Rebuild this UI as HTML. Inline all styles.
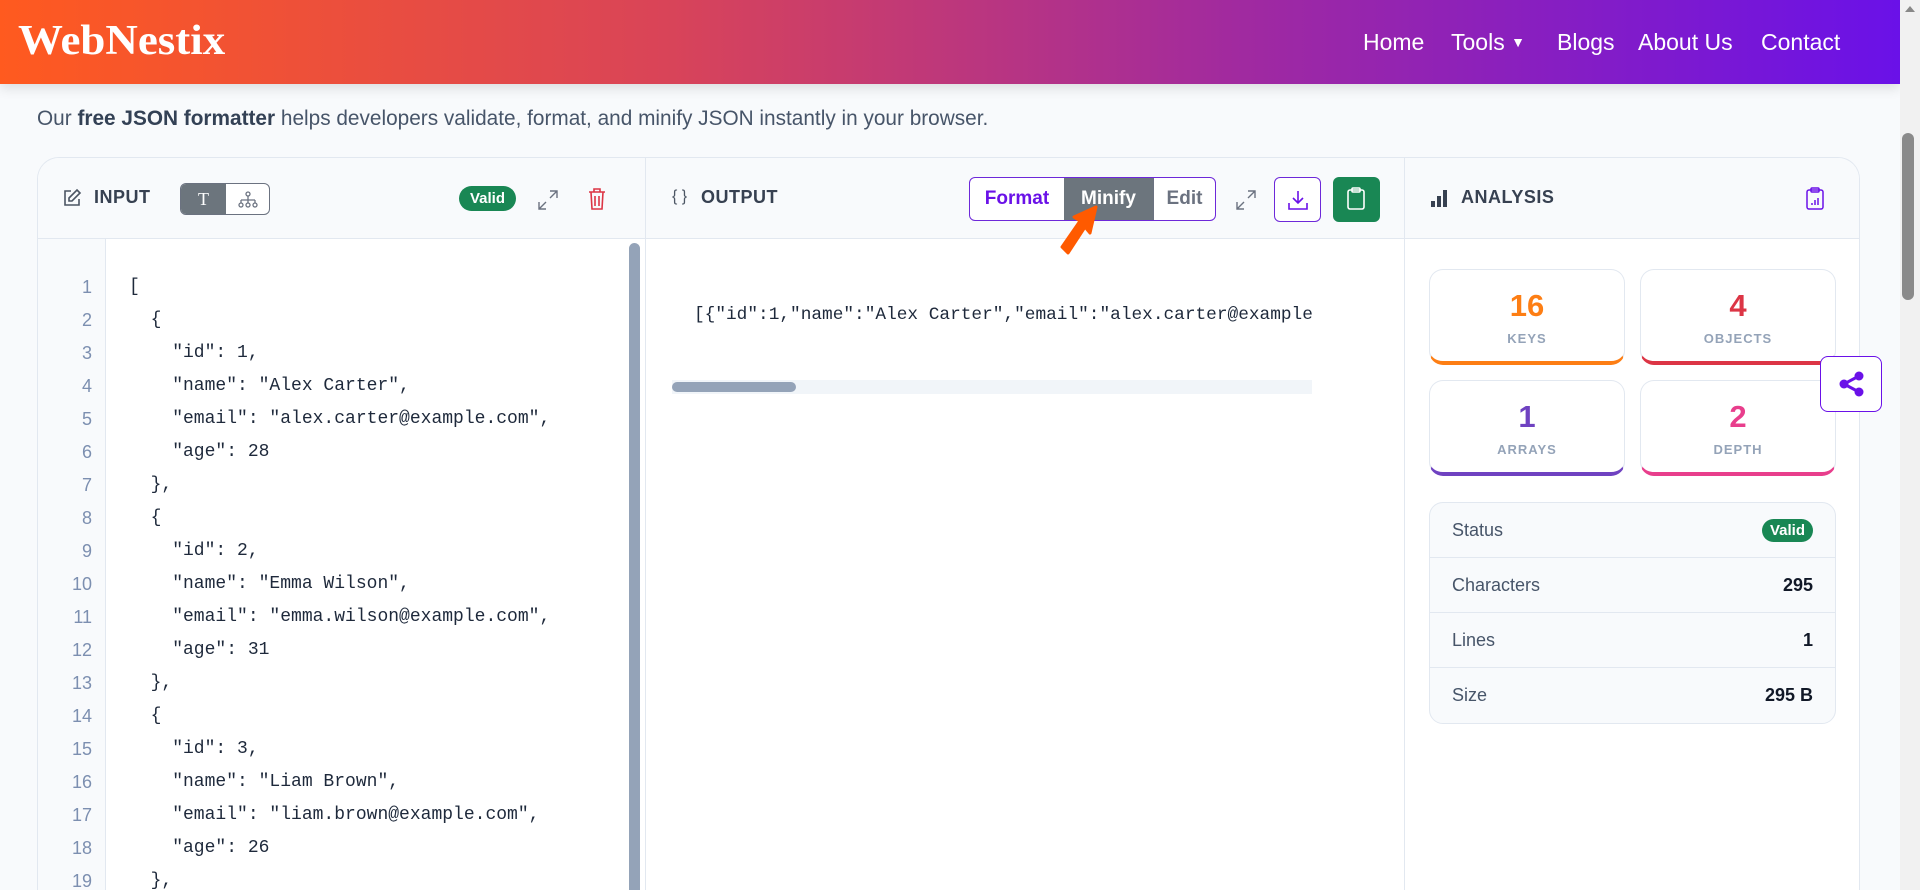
<!DOCTYPE html>
<html style="width:1920px;height:890px;overflow:hidden"><head><meta charset="utf-8"><style>
*{box-sizing:border-box;margin:0;padding:0}
body{width:1920px;height:890px;overflow:hidden;background:#f8fafc;font-family:"Liberation Sans",sans-serif;position:relative;color:#334155}
.hdr{position:absolute;left:0;top:0;width:1900px;height:84px;background:linear-gradient(90deg,#ff5a1f 0%,#d94458 35%,#a12a9f 65%,#6a11e8 100%);box-shadow:0 4px 12px rgba(0,0,0,.12)}
.logo{position:absolute;left:18px;top:17px;font-family:"Liberation Serif",serif;font-weight:bold;font-size:42px;color:#fff;transform:scaleX(1.07);transform-origin:left}
.nav{position:absolute;top:29px;font-size:23px;color:#fff}
.sub{position:absolute;left:37px;top:107px;font-size:20.8px;color:#475569}
.card{position:absolute;left:37px;top:157px;width:1823px;height:733px;background:#fff;border:1px solid #e2e8f0;border-bottom:0;border-radius:22px 22px 0 0;overflow:hidden}
.ch{position:absolute;left:0;top:0;width:100%;height:81px;background:#f8fafc;border-bottom:1px solid #e2e8f0}
.vd{position:absolute;top:0;width:1px;height:100%;background:#e2e8f0}
.ttl{position:absolute;top:29px;font-size:18px;font-weight:bold;color:#374151;letter-spacing:.5px}
.abs{position:absolute}
.gut{position:absolute;left:0;top:81px;width:68px;height:660px;background:#f8fafc;border-right:1px solid #e2e8f0}
.code{position:absolute;left:91px;top:113px;font-family:"Liberation Mono",monospace;font-size:18px;line-height:33px;color:#1e293b;white-space:pre}
.stat{position:absolute;width:196px;height:96px;background:#fff;border:1px solid #e2e8f0;border-radius:14px;border-bottom-width:4px;text-align:center}
.stat b{display:block;font-size:31px;margin-top:20px;line-height:32px}
.stat span{display:block;font-size:13px;font-weight:bold;color:#94a3b8;letter-spacing:1px;margin-top:9px}
.tbl{position:absolute;left:1429px;top:502px;width:407px;height:222px;background:#f8fafc;border:1px solid #e2e8f0;border-radius:14px;overflow:hidden}
.row{height:55px;border-bottom:1px solid #e2e8f0;display:flex;justify-content:space-between;align-items:center;padding:0 22px;font-size:18px;color:#475569}
.row:last-child{border-bottom:none}
.row b{color:#111827}
.badge{background:#198754;color:#fff;font-weight:bold;border-radius:12px;font-size:15px;padding:3px 8px}
</style></head><body>
<div class="hdr">
<div class="logo">WebNestix</div>
<div class="nav" style="left:1363px">Home</div>
<div class="nav" style="left:1451px">Tools <span style="font-size:14px;vertical-align:3px">▼</span></div>
<div class="nav" style="left:1557px">Blogs</div>
<div class="nav" style="left:1638px">About Us</div>
<div class="nav" style="left:1761px">Contact</div>
</div>
<div class="sub">Our <b style="color:#334155">free JSON formatter</b> helps developers validate, format, and minify JSON instantly in your browser.</div>

<div class="card">
<div class="ch"></div>
<div class="vd" style="left:607px"></div>
<div class="vd" style="left:1366px"></div>
<svg class="abs" style="left:24px;top:30px" width="20" height="20" viewBox="0 0 20 20" fill="none" stroke="#4b5563" stroke-width="1.6"><path d="M9 3H3v14h14v-6"/><path d="M15 2l3 3-8 8H7v-3z"/></svg>
<div class="ttl" style="left:56px">INPUT</div>
<div class="abs" style="left:142px;top:25px;width:90px;height:32px;border:1px solid #6b7280;border-radius:6px;overflow:hidden;background:#fff">
<div style="width:45px;height:100%;background:#6c757d;color:#fff;font-family:'Liberation Serif',serif;font-size:18px;text-align:center;line-height:30px">T</div>
<svg class="abs" style="left:56px;top:7px" width="22" height="18" viewBox="0 0 22 18" fill="none" stroke="#6b7280" stroke-width="1.3"><circle cx="11" cy="3" r="2"/><path d="M11 5v4M4 9h14M4 9v3M11 9v3M18 9v3"/><circle cx="4" cy="14" r="2"/><circle cx="11" cy="14" r="2"/><circle cx="18" cy="14" r="2"/></svg>
</div>
<div class="abs badge" style="left:421px;top:28px;font-size:15px;padding:4px 11px;border-radius:14px">Valid</div>
<svg class="abs" style="left:498px;top:30px" width="24" height="24" viewBox="0 0 24 24" fill="none" stroke="#6b7280" stroke-width="1.4"><path d="M14 3h7v7M21 3l-7 7M10 21H3v-7M3 21l7-7"/></svg>
<svg class="abs" style="left:548px;top:29px" width="22" height="24" viewBox="0 0 22 24" fill="none" stroke="#dc3545" stroke-width="1.6"><path d="M3 5h16M8 5V2h6v3M5 5l1 17h10l1-17M9 9v10M13 9v10"/></svg>
<div class="abs" style="left:634px;top:30px;font-size:16px;color:#4b5563">{ }</div>
<div class="ttl" style="left:663px">OUTPUT</div>
<div class="abs" style="left:931px;top:19px;width:247px;height:44px;border:1px solid #6d28d9;border-radius:6px;overflow:hidden;display:flex;font-size:19px;font-weight:bold;line-height:42px;background:#fff">
<div style="width:94px;text-align:center;color:#6a11e8">Format</div>
<div style="width:89px;text-align:center;background:#6c757d;color:#fff">Minify</div>
<div style="flex:1;text-align:center;color:#6b7280;border-left:1px solid #6b7280">Edit</div>
</div>
<svg class="abs" style="left:1196px;top:30px" width="24" height="24" viewBox="0 0 24 24" fill="none" stroke="#6b7280" stroke-width="1.4"><path d="M14 3h7v7M21 3l-7 7M10 21H3v-7M3 21l7-7"/></svg>
<div class="abs" style="left:1236px;top:19px;width:47px;height:45px;border:1px solid #6d28d9;border-radius:6px;background:#fff"><svg style="position:absolute;left:12px;top:11px" width="22" height="22" viewBox="0 0 22 22" fill="none" stroke="#6a11e8" stroke-width="1.6"><path d="M11 2v12M6 9l5 5 5-5M2 14v6h18v-6"/></svg></div>
<div class="abs" style="left:1295px;top:19px;width:47px;height:45px;border-radius:6px;background:#198754"><svg style="position:absolute;left:13px;top:10px" width="20" height="24" viewBox="0 0 20 24" fill="none" stroke="#fff" stroke-width="1.6"><rect x="2" y="3" width="16" height="19" rx="2"/><rect x="6" y="1" width="8" height="4" rx="1"/></svg></div>
<svg class="abs" style="left:1392px;top:32px" width="18" height="17" viewBox="0 0 18 17" fill="#374151"><rect x="1" y="11" width="4" height="6"/><rect x="7" y="6" width="4" height="11"/><rect x="13" y="0" width="4" height="17"/></svg>
<div class="ttl" style="left:1423px">ANALYSIS</div>
<svg class="abs" style="left:1767px;top:29px" width="20" height="24" viewBox="0 0 20 24" fill="none" stroke="#6a11e8" stroke-width="1.5"><rect x="2" y="3" width="16" height="19" rx="2"/><rect x="6" y="1" width="8" height="4" rx="1"/><path d="M7 18v-2M10 18v-5M13 18v-7"/></svg>
<div class="gut"></div>
<div class="abs" style="left:591px;top:85px;width:11px;height:660px;background:#94a3b8;border-radius:6px"></div>
<div class="code">[
  {
    "id": 1,
    "name": "Alex Carter",
    "email": "alex.carter@example.com",
    "age": 28
  },
  {
    "id": 2,
    "name": "Emma Wilson",
    "email": "emma.wilson@example.com",
    "age": 31
  },
  {
    "id": 3,
    "name": "Liam Brown",
    "email": "liam.brown@example.com",
    "age": 26
  },</div>
<div class="abs" style="left:0;top:113px;width:68px;font-family:'Liberation Sans',sans-serif;font-size:18px;line-height:33px;color:#7c8fb0;text-align:right;padding-right:14px;white-space:pre">1
2
3
4
5
6
7
8
9
10
11
12
13
14
15
16
17
18
19</div>
<div class="abs" style="left:656px;top:147px;font-family:'Liberation Mono',monospace;font-size:17.8px;color:#1e293b;white-space:pre">[{"id":1,"name":"Alex Carter","email":"alex.carter@example</div>
<div class="abs" style="left:634px;top:222px;width:640px;height:14px;background:#f1f5f9"><div style="width:124px;height:10px;margin-top:2px;background:#94a3b8;border-radius:5px"></div></div>
</div>

<svg class="abs" style="left:1056px;top:205px" width="44" height="54" viewBox="0 0 44 54"><path d="M40 2L18 12l6 4L6 42l6 6 17-26 5 6z" fill="#ff5a00" stroke="#ff5a00" stroke-width="3" stroke-linejoin="round"/></svg>

<div class="stat" style="left:1429px;top:269px;border-bottom-color:#fd7e14"><b style="color:#fd7e14">16</b><span>KEYS</span></div>
<div class="stat" style="left:1640px;top:269px;border-bottom-color:#dc3545"><b style="color:#dc3545">4</b><span>OBJECTS</span></div>
<div class="stat" style="left:1429px;top:380px;border-bottom-color:#6f42c1"><b style="color:#6f42c1">1</b><span>ARRAYS</span></div>
<div class="stat" style="left:1640px;top:380px;border-bottom-color:#e83e8c"><b style="color:#e83e8c">2</b><span>DEPTH</span></div>
<div class="abs" style="left:1820px;top:356px;width:62px;height:56px;border:1px solid #6a11e8;border-radius:8px;background:#fff"><svg style="position:absolute;left:17px;top:13px" width="28" height="28" viewBox="0 0 28 28" fill="#6a11e8"><circle cx="21" cy="6" r="4.5"/><circle cx="6" cy="14" r="4.5"/><circle cx="21" cy="22" r="4.5"/><path d="M6 14L21 6M6 14l15 8" stroke="#6a11e8" stroke-width="3"/></svg></div>
<div class="tbl">
<div class="row">Status<span class="badge">Valid</span></div>
<div class="row">Characters<b>295</b></div>
<div class="row">Lines<b>1</b></div>
<div class="row">Size<b>295 B</b></div>
</div>
<div class="abs" style="left:1900px;top:0;width:20px;height:890px;background:#f1f1f1"></div>
<div class="abs" style="left:1905px;top:6px;width:0;height:0;border-left:5px solid transparent;border-right:5px solid transparent;border-bottom:6px solid #888"></div>
<div class="abs" style="left:1902px;top:133px;width:12px;height:167px;background:#8a8a8a;border-radius:6px"></div>
</body></html>
